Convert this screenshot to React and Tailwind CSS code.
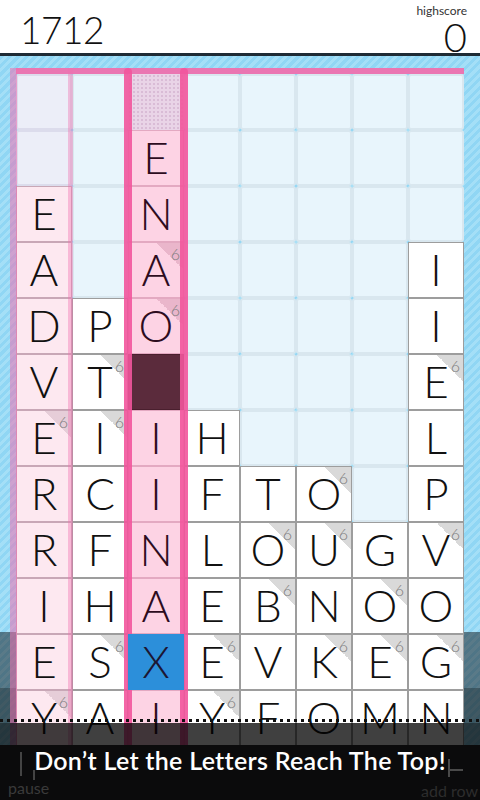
import React from 'react';

// board, top row first. "." empty, "*" drop cell, "#" dark tile, "6" = bonus corner, "!" = selected
const ROWS = [
  '. . * . . . . .',
  '. . E . . . . .',
  'E . N . . . . .',
  'A . A6 . . . . I',
  'D P O6 . . . . I',
  'V T6 # . . . . E6',
  'E6 I6 I H . . . L',
  'R C I F T O6 . P',
  'R F N L O6 U6 G V6',
  'I H A E B6 N O6 O',
  'E S6 X! E6 V K6 E6 G6',
  'Y6 A I Y6 F O M N',
];

const Fold = ({ tone }) => {
  const bg =
    tone === 'soft'
      ? 'bg-[linear-gradient(to_bottom_left,#e6cdd8_50%,transparent_50%)]'
      : tone === 'hot'
      ? 'bg-[linear-gradient(to_bottom_left,#eab6cb_50%,transparent_50%)]'
      : 'bg-[linear-gradient(to_bottom_left,#d9d9d9_50%,transparent_50%)]';
  return (
    <>
      <div className={`absolute top-0 right-0 w-[26px] h-[26px] ${bg}`} />
      <span className="absolute top-[3px] right-[3px] text-[16px] leading-none font-light text-[#7b7b7b]">6</span>
    </>
  );
};

const Cell = ({ t, col }) => {
  if (t === '.') {
    if (col === 0) {
      return <div className="h-[56px] border-2 border-[#dcdcec] bg-[#eceef8] rounded-[3px]" />;
    }
    return <div className="h-[56px] border-2 border-[#d9e7ef] bg-[#e8f5fc] rounded-[3px]" />;
  }
  if (t === '*') {
    return (
      <div className="h-[56px] bg-[#e9d4e7] bg-[radial-gradient(#d9bcd6_1px,transparent_1px)] bg-size-[4px_4px]" />
    );
  }
  if (t === '#') {
    return <div className="h-[56px] border border-[#4a1f2e] bg-[#5b2b3c]" />;
  }

  const letter = t[0];
  const six = t.endsWith('6');
  const selected = t.endsWith('!');

  let box = 'bg-white border-[#9d9d9d] text-[#111]';
  let tone = 'plain';
  if (selected) {
    box = 'bg-[#2c8fda] border-[#2c8fda] text-[#1c1633] z-10';
  } else if (col === 0) {
    box = 'bg-[#fde8f0] border-[#c8a7b6] text-[#111]';
    tone = 'soft';
  } else if (col === 2) {
    box = 'bg-[#fdd3e4] border-[#e3a9c1] text-[#2d0c1e]';
    tone = 'hot';
  }

  return (
    <div className={`relative h-[56px] border flex items-center justify-center pb-[3px] ${box}`}>
      {six && <Fold tone={tone} />}
      <span className="relative text-[44px] leading-none font-light">{letter}</span>
    </div>
  );
};

export default function App() {
  return (
    <div className="relative w-[480px] h-[800px] overflow-hidden bg-white font-['Lato',sans-serif]">
      {/* Header */}
      <div className="h-[56px] border-b-[3px] border-[#1e2b34] flex justify-between">
        <div className="pl-[20px] pt-[11px] text-[37px] leading-none font-light text-[#111] tracking-[-0.5px]">1712</div>
        <div className="pr-[13px] pt-[5px] flex flex-col items-end">
          <span className="text-[12px] leading-none text-[#333]">highscore</span>
          <span className="text-[40px] leading-none font-light text-[#111]">0</span>
        </div>
      </div>

      {/* Board */}
      <div className="relative h-[744px] bg-[repeating-linear-gradient(135deg,#90d6f4_0px,#90d6f4_3px,#a4dff7_3px,#a4dff7_6px)]">
        <div className="absolute left-0 right-0 top-[576px] h-[56px] bg-black/45" />
        <div className="absolute left-0 right-0 top-[632px] h-[35px] bg-black/60" />

        <div className="relative pt-[12px] px-[16px]">
          <div className="h-[6px] bg-[#ea76b2]" />
          <div className="relative grid grid-cols-8">
            {ROWS.map((row, r) =>
              row.split(' ').map((t, c) => <Cell key={`${r}-${c}`} t={t} col={c} />)
            )}
          </div>

          {/* word path highlight */}
          <div className="absolute top-[12px] bottom-0 left-[10px] w-[7px] bg-[#f070b0]/55" />
          <div className="absolute top-[12px] bottom-0 left-[68px] w-[5px] bg-[#f070b0]/40" />
          <div className="absolute top-[12px] bottom-0 left-[124px] w-[8px] bg-[#f2559c]/90 rounded-t-full" />
          <div className="absolute top-[12px] bottom-0 left-[180px] w-[8px] bg-[#f2559c]/90 rounded-t-full" />
        </div>

        {/* danger line */}
        <div className="absolute left-0 right-0 top-[663px] h-[3px] bg-[linear-gradient(to_right,#111_3px,transparent_3px)] bg-size-[7px_3px]" />
        <div className="absolute left-0 right-0 top-[667px] h-[22px] bg-black/75" />
      </div>

      {/* Bottom bar */}
      <div className="absolute left-0 right-0 bottom-0 h-[55px] bg-[#0b0b0c] flex justify-between items-end">
        <div className="flex flex-col items-start pl-[8px] pb-[4px]">
          <div className="flex items-end gap-[11px] pl-[12px] h-[28px]">
            <div className="w-[2px] h-[24px] self-start bg-[#444]" />
            <div className="w-[2px] h-[10px] bg-[#444]" />
          </div>
          <span className="text-[16px] leading-none text-[#3a3a3a]">pause</span>
        </div>
        <div className="flex flex-col items-start pr-[2px] pb-[1px]">
          <div className="flex items-center pl-[27px] h-[30px]">
            <div className="w-[2px] h-[18px] bg-[#4a4a4a]" />
            <div className="w-[13px] h-[2px] mt-[4px] bg-[#4a4a4a]" />
          </div>
          <span className="text-[16px] leading-none whitespace-nowrap text-[#2d2d2d]">add row</span>
        </div>
        <div className="absolute left-0 right-0 top-[3px] text-center text-[25px] leading-none font-semibold tracking-[0.3px] text-white">
          Don’t Let the Letters Reach The Top!
        </div>
      </div>
    </div>
  );
}
